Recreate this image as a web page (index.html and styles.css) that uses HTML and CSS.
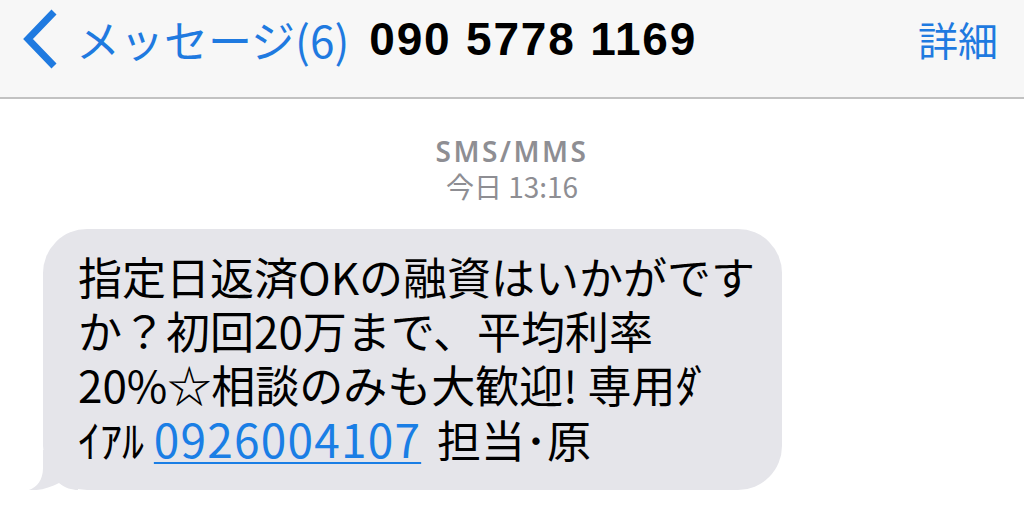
FILE: index.html
```html
<!DOCTYPE html>
<html lang="ja">
<head>
<meta charset="utf-8">
<title>メッセージ</title>
<link rel="stylesheet" href="styles.css">
</head>
<body>
<header class="nav">
  <a class="back">
    <svg class="chev" viewBox="0 0 36 60" width="36" height="60" aria-hidden="true">
      <polyline points="32,3 6,30 32,57" fill="none" stroke="#1f7ae0" stroke-width="7" stroke-linejoin="miter"/>
    </svg>
    <span class="back-label">メッセージ(6)</span>
  </a>
  <h1 class="title">090 5778 1169</h1>
  <span class="details">詳細</span>
</header>
<main class="thread">
  <div class="stamp">
    <div class="service">SMS/MMS</div>
    <div class="time">今日 13:16</div>
  </div>
  <div class="row">
    <div class="bubble">
      <p class="msg">指定日返済OKの融資はいかがです<br>か？初回20万まで、平均利率<br>20%☆相談のみも大歓迎! 専用<span class="hw">ﾀ</span>ﾞ<br>ｲｱﾙ <a class="tel">0926004107</a> 担当･原</p>
      <svg class="tail" viewBox="0 0 50 40" width="50" height="40" aria-hidden="true">
        <path d="M15,0 L15,18 C15,30 9,37 1,40 C10,41 22,38 31,33 C37,38 44,40 50,40 L50,0 Z" fill="#e5e5ea"/>
      </svg>
    </div>
  </div>
</main>
</body>
</html>
```
FILE: styles.css
```css
html, body {
  margin: 0;
  padding: 0;
  background: #ffffff;
}
body {
  width: 1024px;
  height: 523px;
  overflow: hidden;
  font-family: "Noto Sans CJK JP", "Noto Sans", sans-serif;
  color: #000;
}
.nav {
  display: flex;
  align-items: center;
  height: 97px;
  box-sizing: content-box;
  padding: 0 26px 0 22px;
  background: #f7f7f7;
  border-bottom: 2px solid #c2c2c2;
}
.back {
  display: flex;
  align-items: center;
  color: #1f7ae0;
  margin-bottom: 20px;
}
.chev {
  display: block;
}
.back-label {
  margin-left: 18px;
  font-size: 44px;
  line-height: 1;
  font-weight: 400;
}
.title {
  margin: 0 0 20px 20px;
  font-family: "Liberation Sans", Arial, sans-serif;
  font-weight: 700;
  font-size: 46px;
  letter-spacing: 1.8px;
  line-height: 1;
}
.details {
  margin: 0 0 20px auto;
  font-size: 40px;
  line-height: 1;
  color: #1f7ae0;
}
.thread {
  display: flex;
  flex-direction: column;
}
.stamp {
  padding-top: 35px;
  text-align: center;
  color: #8e8e93;
  line-height: 35px;
}
.service {
  font-family: "Noto Sans", sans-serif;
  font-weight: 600;
  font-size: 28px;
  letter-spacing: 2.5px;
}
.time {
  font-size: 28px;
  font-weight: 400;
}
.row {
  display: flex;
  margin-top: 25px;
  padding-left: 43px;
}
.bubble {
  position: relative;
  width: 739px;
  box-sizing: border-box;
  padding: 20px 20px 24px 35px;
  background: #e5e5ea;
  border-radius: 44px;
}
.msg {
  margin: 0;
  font-size: 44px;
  line-height: 54px;
  white-space: nowrap;
}
.hw {
  letter-spacing: -8px;
}
.tel {
  font-size: 46px;
  letter-spacing: 1.2px;
  margin-right: 6px;
  color: #1a7ee5;
  text-decoration: underline;
  text-decoration-thickness: 2px;
  text-underline-offset: 4px;
}
.tail {
  position: absolute;
  left: -15px;
  bottom: 0;
  display: block;
}
```
